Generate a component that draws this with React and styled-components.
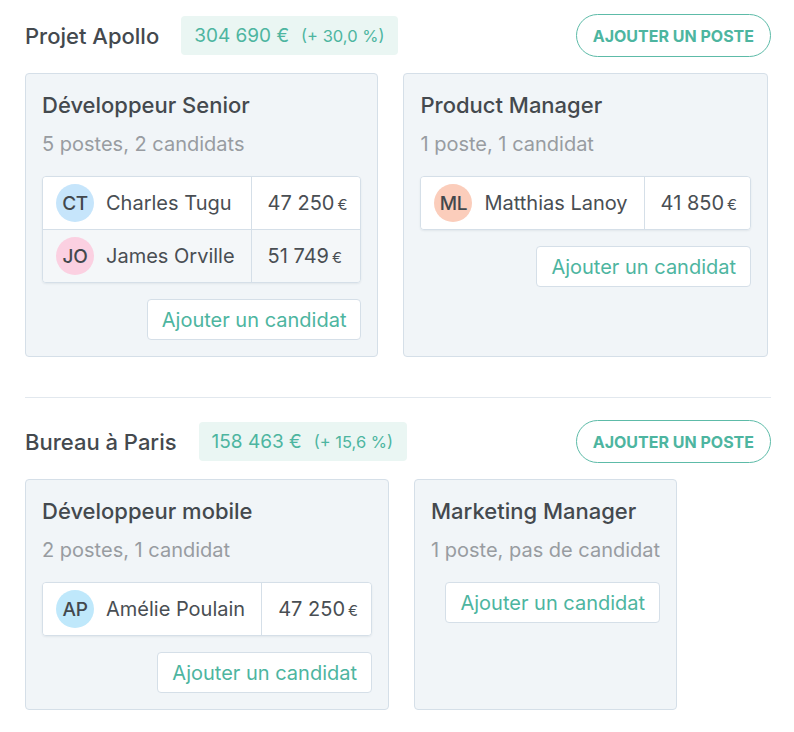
import React from "react";
import styled, { createGlobalStyle } from "styled-components";

// ================= Styles =================

const GlobalStyle = createGlobalStyle`
  body {
    margin: 0;
    background: #ffffff;
    font-family: Inter, "Noto Sans", sans-serif;
    color: #42474c;
  }
`;

const Page = styled.div`
  width: 746px;
  padding: 14px 23px 0 25px;
`;

const Section = styled.section`
  padding: ${(p) => (p.$first ? "0" : "22px")} 0 ${(p) => (p.$last ? "0" : "40px")};
  border-bottom: ${(p) => (p.$last ? "none" : "1px solid #e2e8ee")};
`;

const Header = styled.div`
  display: flex;
  align-items: center;
  height: 43px;
  margin-bottom: 16px;
`;

const SectionTitle = styled.h2`
  margin: 0 22px 0 0;
  font-size: 22px;
  font-weight: 500;
  color: #44494e;
`;

const Badge = styled.div`
  display: flex;
  align-items: baseline;
  gap: 12px;
  height: 39px;
  box-sizing: border-box;
  padding: 0 14px 0 13px;
  line-height: 39px;
  border-radius: 4px;
  background: #eaf6f3;
  color: #4db5a0;
`;

const Amount = styled.span`
  font-size: 19px;
`;

const Delta = styled.span`
  font-size: 16.5px;
`;

const PillButton = styled.button`
  margin-left: auto;
  height: 43px;
  padding: 0 16px;
  border: 1.5px solid #5dbba8;
  border-radius: 999px;
  background: #fff;
  color: #4db5a0;
  font-family: Inter, sans-serif;
  font-size: 16px;
  font-weight: 700;
  text-transform: uppercase;
  cursor: pointer;
`;

const Cards = styled.div`
  display: flex;
  gap: 25px;
  align-items: stretch;
`;

const Card = styled.div`
  display: flex;
  flex-direction: column;
  padding: 16px;
  background: #f1f5f8;
  border: 1px solid #d5dfe8;
  border-radius: 4px;
`;

const CardTitle = styled.h3`
  margin: 0;
  font-size: 22px;
  line-height: 30px;
  font-weight: 500;
  color: #44494e;
`;

const CardMeta = styled.p`
  margin: 10px 0 18px;
  font-size: 20px;
  line-height: 28px;
  color: #989ca1;
`;

const Table = styled.table`
  width: 100%;
  margin-bottom: 16px;
  border: 1px solid #d5dfe8;
  border-radius: 4px;
  border-spacing: 0;
  overflow: hidden;
  box-shadow: 0 1px 2px rgba(40, 60, 80, 0.08);

  tr + tr td {
    border-top: 1px solid #d5dfe8;
  }
`;

const Row = styled.tr`
  background: ${(p) => (p.$alt ? "#f4f7f9" : "#ffffff")};
`;

const NameCell = styled.td`
  height: 52px;
  padding: 0 16px 0 13px;
  border-right: 1px solid #d5dfe8;
  font-size: 20px;
  color: #494e53;
  white-space: nowrap;
`;

const Person = styled.div`
  display: flex;
  align-items: center;
  gap: 12px;
`;

const Avatar = styled.span`
  display: flex;
  align-items: center;
  justify-content: center;
  width: 38px;
  height: 38px;
  border-radius: 50%;
  background: ${(p) => p.$color};
  color: #43484d;
  font-size: 19px;
  font-weight: 500;
  letter-spacing: -0.3px;
`;

const PriceCell = styled.td`
  height: 52px;
  padding: 0 13px 0 16px;
  font-size: 20px;
  color: #494e53;
  white-space: nowrap;
`;

const Currency = styled.span`
  margin-left: 3px;
  font-size: 15px;
`;

const AddButton = styled.button`
  align-self: flex-end;
  height: 41px;
  padding: 0 14px;
  background: #ffffff;
  border: 1px solid #d5dfe8;
  border-radius: 4px;
  color: #4db5a0;
  font-family: Inter, sans-serif;
  font-size: 20px;
  cursor: pointer;
`;

// ================= Data =================

const groups = [
  {
    name: "Projet Apollo",
    amount: "304 690 €",
    delta: "(+ 30,0 %)",
    jobs: [
      {
        title: "Développeur Senior",
        meta: "5 postes, 2 candidats",
        candidates: [
          { initials: "CT", name: "Charles Tugu", salary: "47 250", color: "#c6e5fb" },
          { initials: "JO", name: "James Orville", salary: "51 749", color: "#fbd0e1" },
        ],
      },
      {
        title: "Product Manager",
        meta: "1 poste, 1 candidat",
        candidates: [
          { initials: "ML", name: "Matthias Lanoy", salary: "41 850", color: "#fbcdbb" },
        ],
      },
    ],
  },
  {
    name: "Bureau à Paris",
    amount: "158 463 €",
    delta: "(+ 15,6 %)",
    jobs: [
      {
        title: "Développeur mobile",
        meta: "2 postes, 1 candidat",
        candidates: [
          { initials: "AP", name: "Amélie Poulain", salary: "47 250", color: "#bfe8fb" },
        ],
      },
      {
        title: "Marketing Manager",
        meta: "1 poste, pas de candidat",
        candidates: [],
      },
    ],
  },
];

// ================= Component =================

export default function App() {
  return (
    <>
      <GlobalStyle />
      <Page>
        {groups.map((group, gi) => (
          <Section key={group.name} $first={gi === 0} $last={gi === groups.length - 1}>
            <Header>
              <SectionTitle>{group.name}</SectionTitle>
              <Badge>
                <Amount>{group.amount}</Amount>
                <Delta>{group.delta}</Delta>
              </Badge>
              <PillButton>Ajouter un poste</PillButton>
            </Header>

            <Cards>
              {group.jobs.map((job) => (
                <Card key={job.title}>
                  <CardTitle>{job.title}</CardTitle>
                  <CardMeta>{job.meta}</CardMeta>
                  {job.candidates.length > 0 && (
                    <Table>
                      <tbody>
                        {job.candidates.map((c, i) => (
                          <Row key={c.name} $alt={i % 2 === 1}>
                            <NameCell>
                              <Person>
                                <Avatar $color={c.color}>{c.initials}</Avatar>
                                {c.name}
                              </Person>
                            </NameCell>
                            <PriceCell>
                              {c.salary}
                              <Currency>€</Currency>
                            </PriceCell>
                          </Row>
                        ))}
                      </tbody>
                    </Table>
                  )}
                  <AddButton>Ajouter un candidat</AddButton>
                </Card>
              ))}
            </Cards>
          </Section>
        ))}
      </Page>
    </>
  );
}
